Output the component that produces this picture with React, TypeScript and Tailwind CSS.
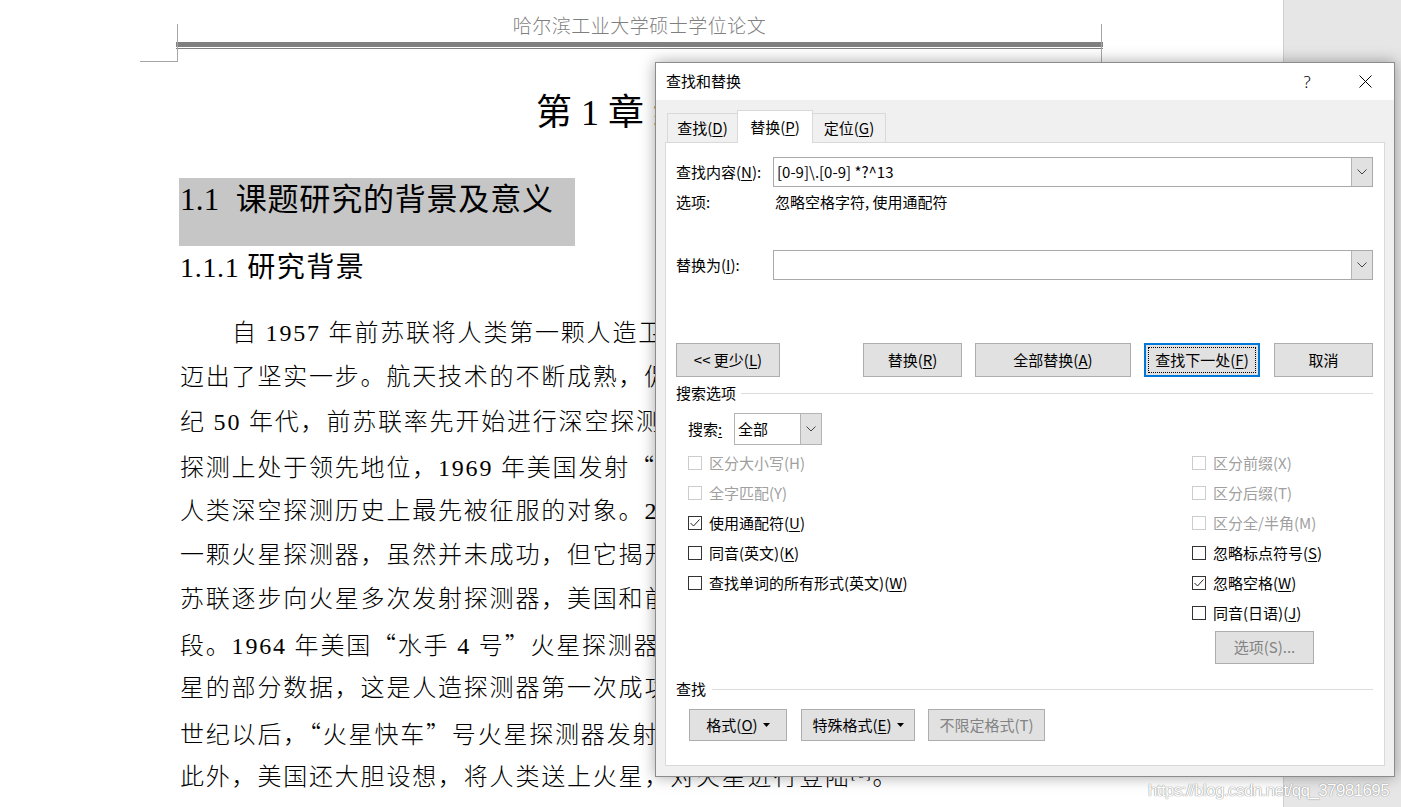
import React from "react";
import clsx from "clsx";

const M = ({ c }: { c: string }) => (
  <u className="underline decoration-1 underline-offset-[2px]">{c}</u>
);

// full-width CJK quotation marks, as Word sets them in Chinese text
const Q = ({ c }: { c: string }) => (
  <span className="font-['Noto_Sans_CJK_SC',sans-serif]">{c}</span>
);

const Ref = ({ n }: { n: number }) => (
  <sup className="text-[14px] leading-none">[{n}]</sup>
);

const Chevron = () => (
  <svg width="10" height="6" viewBox="0 0 10 6">
    <path d="M0.5 0.5 L5 5 L9.5 0.5" stroke="#444" strokeWidth="1" fill="none" />
  </svg>
);

const Caret = () => (
  <svg width="7" height="4" viewBox="0 0 7 4" className="ml-[5px]">
    <path d="M0 0 H7 L3.5 4 Z" fill="#000" />
  </svg>
);

type BtnProps = {
  children: React.ReactNode;
  className?: string;
  disabled?: boolean;
};

const Btn = ({ children, className, disabled }: BtnProps) => (
  <div
    className={clsx(
      "bg-[#e1e1e1] border border-[#adadad] flex items-center justify-center",
      disabled ? "text-[#838383]" : "text-black",
      className
    )}
  >
    {children}
  </div>
);

type CheckProps = {
  label: React.ReactNode;
  checked?: boolean;
  disabled?: boolean;
};

const Check = ({ label, checked, disabled }: CheckProps) => (
  <div className="h-[30px] flex items-center">
    <span
      className={clsx(
        "w-[14px] h-[14px] border bg-white flex items-center justify-center",
        disabled ? "border-[#cccccc]" : "border-[#333333]"
      )}
    >
      {checked && (
        <svg width="12" height="12" viewBox="0 0 12 12">
          <path d="M1.5 6 L4.5 9 L10.5 2.5" stroke="#222" strokeWidth="1" fill="none" />
        </svg>
      )}
    </span>
    <span className={clsx("ml-[7px] leading-[20px]", disabled ? "text-[#a0a0a0]" : "text-black")}>
      {label}
    </span>
  </div>
);

const ComboInput = ({ value }: { value?: string }) => (
  <div className="flex-1 h-[30px] border border-[#a9a9a9] bg-white flex">
    <div className="flex-1 pl-[3px] flex items-center">{value}</div>
    <div className="w-[21px] bg-[#e1e1e1] border-l border-[#b4b4b4] flex items-center justify-center">
      <Chevron />
    </div>
  </div>
);

const bodyLines: React.ReactNode[] = [
  "自 1957 年前苏联将人类第一颗人造卫星送入太空，人类在探索宇宙的道路上",
  "迈出了坚实一步。航天技术的不断成熟，促使人类将目光投向更遥远的深空。20 世",
  "纪 50 年代，前苏联率先开始进行深空探测，随后美国紧随其后，两国在深空",
  <>
    探测上处于领先地位，1969 年美国发射<Q c="“" />阿波罗 11 号<Q c="”" />成功登月。火星成为
  </>,
  "人类深空探测历史上最先被征服的对象。20 世纪 60 年代前苏联发射了第",
  "一颗火星探测器，虽然并未成功，但它揭开了人类火星探测的序幕。此后，",
  "苏联逐步向火星多次发射探测器，美国和前苏联的火星探测进入激烈竞争阶",
  <>
    段。1964 年美国<Q c="“" />水手 4 号<Q c="”" />火星探测器
    <Ref n={5} />成功飞越火星，并传回了火
  </>,
  "星的部分数据，这是人造探测器第一次成功获取火星近距离图像。进入 21",
  <>
    世纪以后，<Q c="“" />火星快车<Q c="”" />号火星探测器发射升空，火星探测进入新的阶段。
  </>,
  <>
    此外，美国还大胆设想，将人类送上火星，对火星进行登陆
    <Ref n={6} />。
  </>,
];

const Page = () => (
  <div className="w-[1284px] h-full border-r border-[#d0d0d0] overflow-hidden font-['Liberation_Serif','Noto_Sans_CJK_SC',serif] text-black">
    {/* running header */}
    <div className="relative h-[63px]">
      <div className="absolute left-[140px] top-[24px] w-[38px] h-[38px] border-r border-b border-[#a6a6a6]" />
      <div className="absolute left-[1101px] top-[24px] h-[38px] border-l border-[#a6a6a6]" />
      <div className="ml-[176px] w-[927px] pt-[15px]">
        <div className="h-[24px] leading-[24px] text-center text-[19px] tracking-[0.5px] text-[#7f7f7f] font-light">
          哈尔滨工业大学硕士学位论文
        </div>
        <div className="mt-[3px] h-[5px] bg-[#808080]" />
        <div className="mt-[1px] h-[1px] bg-[#808080]" />
      </div>
    </div>

    <div className="mt-[25px] h-[50px] leading-[50px] text-[36px] pl-[536px] whitespace-nowrap">
      第 1 章 绪论
    </div>

    <div className="pl-[179px] mt-[40px]">
      <div className="w-[396px] h-[68px] bg-[#c6c6c6] pl-[1px] text-[31px] leading-[44px] tracking-[0.8px] whitespace-nowrap">
        <span className="tracking-[0.3px]">1.1&nbsp;&nbsp;</span>课题研究的背景及意义
      </div>
    </div>

    <div className="pl-[180px] mt-[2px] h-[40px] leading-[40px] text-[28px] tracking-[1.5px] whitespace-nowrap">
      <span className="tracking-[0.7px]">1.1.1 </span>研究背景
    </div>

    <div className="pl-[180px] mt-[23px] text-[24px] leading-[44.4px] tracking-[1.8px] font-light">
      {bodyLines.map((l, i) => (
        <div key={i} className={clsx("h-[44.4px] whitespace-nowrap", i === 0 && "pl-[52px]")}>
          {l}
        </div>
      ))}
    </div>
  </div>
);

const Dialog = () => (
  <div className="absolute left-[655px] top-[62px] w-[740px] h-[715px] bg-[#f0f0f0] border border-[#8c8c8c] shadow-[0_0_14px_rgba(0,0,0,0.35)] flex flex-col font-['Noto_Sans_CJK_SC','Noto_Sans',sans-serif] text-[15px] text-black">
    {/* title bar */}
    <div className="h-[37px] bg-white flex items-center pl-[10px] pr-[6px]">
      <div className="flex-1">查找和替换</div>
      <div className="w-[46px] flex justify-center text-[17px] font-['Noto_Sans',sans-serif] font-light">?</div>
      <div className="w-[12px]" />
      <div className="w-[46px] flex justify-center">
        <svg width="13" height="13" viewBox="0 0 13 13">
          <path d="M0.5 0.5 L12.5 12.5 M12.5 0.5 L0.5 12.5" stroke="#000" strokeWidth="1" />
        </svg>
      </div>
    </div>

    {/* tabs */}
    <div className="h-[42px] flex items-end pl-[11px]">
      <div className="w-[70px] h-[29px] border-t border-l border-[#d9d9d9] flex items-center justify-center">
        查找(<M c="D" />)
      </div>
      <div className="relative z-10 -mb-[1px] w-[76px] h-[33px] bg-white border-t border-x border-[#d9d9d9] flex items-center justify-center">
        替换(<M c="P" />)
      </div>
      <div className="w-[73px] h-[29px] border-t border-r border-[#d9d9d9] flex items-center justify-center">
        定位(<M c="G" />)
      </div>
    </div>

    {/* panel */}
    <div className="mx-[9px] h-[624px] bg-white border border-[#d9d9d9] pl-[10px] pr-[11px] flex flex-col">
      <div className="mt-[14px] flex items-center">
        <div className="w-[97px]">
          查找内容(<M c="N" />):
        </div>
        <ComboInput value="[0-9]\.[0-9] *?^13" />
      </div>

      <div className="mt-[6px] h-[18px] flex items-center">
        <div className="w-[99px]">选项:</div>
        <div>忽略空格字符, 使用通配符</div>
      </div>

      <div className="mt-[39px] flex items-center">
        <div className="w-[97px]">
          替换为(<M c="I" />):
        </div>
        <ComboInput />
      </div>

      <div className="mt-[63px] flex h-[34px]">
        <Btn className="w-[104px]">
          &lt;&lt; 更少(<M c="L" />)
        </Btn>
        <div className="flex-1" />
        <div className="flex gap-[13px]">
          <Btn className="w-[99px]">
            替换(<M c="R" />)
          </Btn>
          <Btn className="w-[156px]">
            全部替换(<M c="A" />)
          </Btn>
          <div className="w-[116px] bg-[#e1e1e1] border-2 border-[#0078d7] p-[2px]">
            <div className="h-full border border-dotted border-black flex items-center justify-center">
              查找下一处(<M c="F" />)
            </div>
          </div>
          <Btn className="w-[99px] ml-px">取消</Btn>
        </div>
      </div>

      <div className="mt-[7px] h-[18px] flex items-center gap-[5px]">
        <div>搜索选项</div>
        <div className="flex-1 h-px bg-[#dcdcdc]" />
      </div>

      <div className="mt-[11px] pl-[12px] flex items-center">
        <div className="w-[46px]">
          搜索<u className="underline decoration-1 underline-offset-[2px]">:</u>
        </div>
        <div className="w-[88px] h-[32px] border border-[#b4b4b4] bg-white flex">
          <div className="flex-1 pl-[3px] flex items-center">全部</div>
          <div className="w-[21px] bg-[#e1e1e1] border-l border-[#b4b4b4] flex items-center justify-center">
            <Chevron />
          </div>
        </div>
      </div>

      <div className="mt-[3px] flex">
        <div className="flex-1 pl-[12px]">
          <Check label="区分大小写(H)" disabled />
          <Check label="全字匹配(Y)" disabled />
          <Check checked label={<>使用通配符(<M c="U" />)</>} />
          <Check label={<>同音(英文)(<M c="K" />)</>} />
          <Check label={<>查找单词的所有形式(英文)(<M c="W" />)</>} />
        </div>
        <div className="w-[181px]">
          <Check label="区分前缀(X)" disabled />
          <Check label="区分后缀(T)" disabled />
          <Check label="区分全/半角(M)" disabled />
          <Check label={<>忽略标点符号(<M c="S" />)</>} />
          <Check checked label={<>忽略空格(<M c="W" />)</>} />
          <Check label={<>同音(日语)(<M c="J" />)</>} />
          <Btn disabled className="mt-[3px] ml-[23px] w-[99px] h-[33px]">
            选项(S)...
          </Btn>
        </div>
      </div>

      <div className="mt-[16px] h-[18px] flex items-center gap-[6px]">
        <div>查找</div>
        <div className="flex-1 h-px bg-[#dcdcdc]" />
      </div>

      <div className="mt-[11px] pl-[13px] flex gap-[14px] h-[32px]">
        <Btn className="w-[98px]">
          格式(<M c="O" />)
          <Caret />
        </Btn>
        <Btn className="w-[114px]">
          特殊格式(<M c="E" />)
          <Caret />
        </Btn>
        <Btn disabled className="w-[117px] -ml-px">
          不限定格式(T)
        </Btn>
      </div>
    </div>
  </div>
);

export default function App() {
  return (
    <div className="w-[1401px] h-[807px] relative overflow-hidden bg-white flex">
      <Page />
      <div className="flex-1 bg-[#e6e6e6]" />
      <Dialog />
      <div className="absolute left-[1148px] top-[778px] text-[17px] tracking-[-0.6px] font-['Liberation_Sans',sans-serif] text-white [text-shadow:0_0_1px_#8a8a8a,0_0_1px_#8a8a8a]">
        https://blog.csdn.net/qq_37981695
      </div>
    </div>
  );
}
